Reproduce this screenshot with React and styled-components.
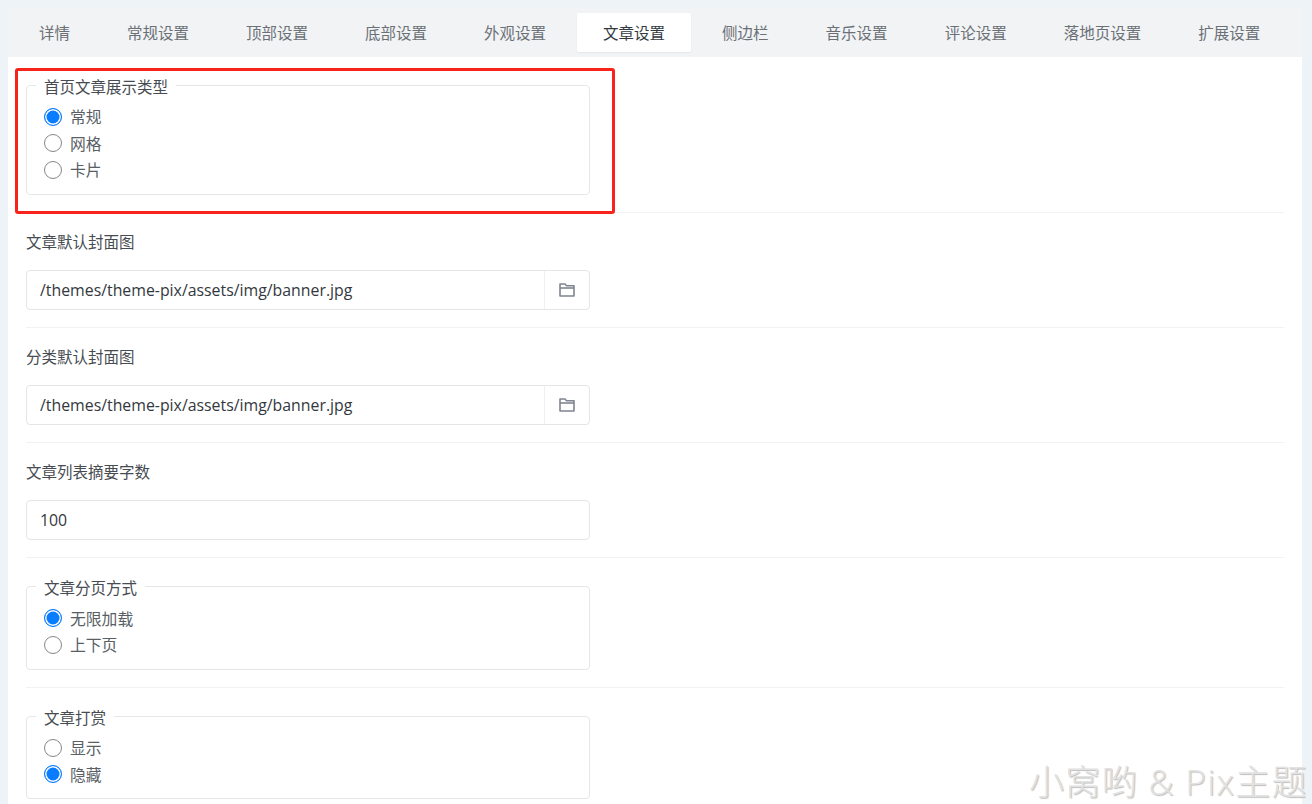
import React from "react";
import styled, { createGlobalStyle } from "styled-components";

const GlobalStyle = createGlobalStyle`
    html, body {
        margin: 0;
        height: 804px;
        overflow: hidden;
        background: #eef3f8;
        font-family: "Open Sans", "Noto Sans CJK SC", sans-serif;
    }
    * {
        box-sizing: border-box;
    }
`;

const Page = styled.div`
    position: relative;
    height: 804px;
    padding: 8px 10px 0 8px;
    overflow: hidden;
`;

const Card = styled.div`
    background: #fff;
    border-radius: 4px 4px 0 0;
    height: 796px;
    overflow: hidden;
`;

const TabBar = styled.div`
    display: flex;
    gap: 5px;
    height: 49px;
    padding: 5px;
    background: #f1f3f5;
`;

const Tab = styled.div`
    padding: 1px 26px 0;
    height: 39px;
    line-height: 38px;
    font-size: 15.5px;
    border-radius: 2px;
    color: ${props => (props.$active ? "#333a42" : "#6b7076")};
    background: ${props => (props.$active ? "#fff" : "transparent")};
    box-shadow: ${props => (props.$active ? "0 1px 2px rgba(0, 0, 0, 0.05)" : "none")};
`;

const Body = styled.div`
    padding: 0 18px;
`;

const Row = styled.div`
    padding: ${props => (props.$field ? "17.5px 0 17.4px" : "19px 0 17.1px")};
    border-bottom: 1px solid #f1f2f4;
`;

const Label = styled.div`
    height: 20px;
    line-height: 20px;
    margin-bottom: 18px;
    font-size: 15.5px;
    color: #474c52;
`;

const Group = styled.fieldset`
    width: 564px;
    margin: 0;
    padding: 0 0 1px 9px;
    border: 1px solid #e5e7ea;
    border-radius: 4px;
`;

const Legend = styled.legend`
    padding: 2px 8px 0;
    font-size: 15.5px;
    line-height: 20px;
    color: #474c52;
`;

const RadioList = styled.div`
    padding: 7px 0 9.5px 8px;
`;

const RadioRow = styled.label`
    display: flex;
    align-items: center;
    gap: 8px;
    height: 26.6px;
    font-size: 15.8px;
    color: #5a5f65;
`;

const RadioDot = styled.input.attrs({ type: "radio" })`
    appearance: none;
    flex: none;
    width: 18px;
    height: 18px;
    margin: 0;
    border-radius: 50%;
    border: 1.5px solid ${props => (props.checked ? "#0a7cff" : "#85888c")};
    background: ${props => (props.checked ? "#0a7cff" : "#fff")};
    box-shadow: ${props => (props.checked ? "inset 0 0 0 1.5px #fff" : "none")};
`;

const InputBox = styled.div`
    display: flex;
    width: 564px;
    height: 40px;
    border: 1px solid #e3e5e8;
    border-radius: 4px;
`;

const Value = styled.div`
    flex: 1;
    padding-left: 13px;
    line-height: 38px;
    font-size: 15.85px;
    color: #33383e;
`;

const PickButton = styled.div`
    flex: none;
    width: 45px;
    display: flex;
    align-items: center;
    justify-content: center;
    border-left: 1px solid #eff0f2;
`;

const RedBox = styled.div`
    position: absolute;
    left: 15px;
    top: 68px;
    width: 600px;
    height: 146px;
    border: 3px solid #f8241c;
    border-radius: 3px;
    pointer-events: none;
`;

const Watermark = styled.div`
    position: absolute;
    right: 4px;
    bottom: -1px;
    font-size: 35px;
    line-height: 46px;
    font-weight: 300;
    letter-spacing: 1.37px;
    white-space: nowrap;
    color: #e2e2e2;
    text-shadow: 1px 1px 1px #bdbdbd;
`;

const FolderIcon = () => (
    <svg width="16" height="16" viewBox="0 0 16 16" fill="none" stroke="#7f8590" strokeWidth="1.6">
        <path d="M1 14V2h5l1.5 1.7H15V14z" strokeLinejoin="round" />
        <path d="M1 6h14" />
    </svg>
);

const tabs = ["详情", "常规设置", "顶部设置", "底部设置", "外观设置", "文章设置", "侧边栏", "音乐设置", "评论设置", "落地页设置", "扩展设置"];

const bannerPath = "/themes/theme-pix/assets/img/banner.jpg";

const RadioGroup = ({ legend, name, options, value }) => (
    <Row $field>
        <Group>
            <Legend>{legend}</Legend>
            <RadioList>
                {options.map(option => (
                    <RadioRow key={option}>
                        <RadioDot name={name} checked={option === value} readOnly />
                        {option}
                    </RadioRow>
                ))}
            </RadioList>
        </Group>
    </Row>
);

const TextRow = ({ label, value, picker }) => (
    <Row>
        <Label>{label}</Label>
        <InputBox>
            <Value>{value}</Value>
            {picker && (
                <PickButton>
                    <FolderIcon />
                </PickButton>
            )}
        </InputBox>
    </Row>
);

export default function App() {
    return (
        <Page>
            <GlobalStyle />
            <Card>
                <TabBar>
                    {tabs.map(tab => (
                        <Tab key={tab} $active={tab === "文章设置"}>
                            {tab}
                        </Tab>
                    ))}
                </TabBar>
                <Body>
                    <RadioGroup legend="首页文章展示类型" name="listType" options={["常规", "网格", "卡片"]} value="常规" />
                    <TextRow label="文章默认封面图" value={bannerPath} picker />
                    <TextRow label="分类默认封面图" value={bannerPath} picker />
                    <TextRow label="文章列表摘要字数" value="100" />
                    <RadioGroup legend="文章分页方式" name="paging" options={["无限加载", "上下页"]} value="无限加载" />
                    <RadioGroup legend="文章打赏" name="reward" options={["显示", "隐藏"]} value="隐藏" />
                </Body>
            </Card>
            <RedBox />
            <Watermark>小窝哟 &amp; Pix主题</Watermark>
        </Page>
    );
}
